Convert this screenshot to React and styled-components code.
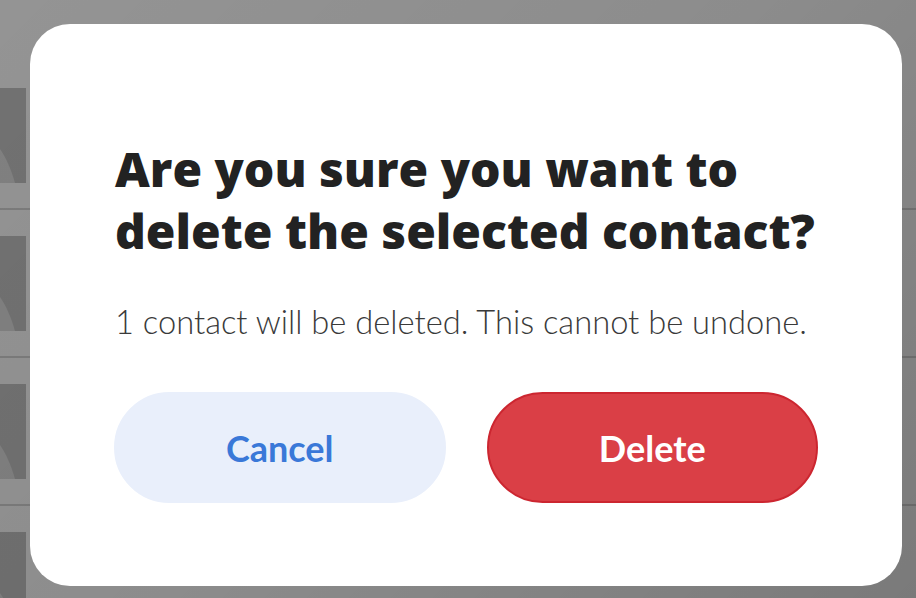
import React from 'react'
import styled, { createGlobalStyle } from 'styled-components'

const GlobalStyle = createGlobalStyle`
    html, body {
        margin: 0;
        padding: 0;
        background: #ffffff;
        overflow: hidden;
    }
`

const Page = styled.div`
    width: 916px;
    height: 598px;
    position: relative;
    overflow: hidden;
    background: #ffffff;
`

const ContactList = styled.div`
    display: flex;
    flex-direction: column;
    padding-top: 60px;
`

const ContactRow = styled.div`
    height: 146px;
    border-top: 2px solid ${props => props.first ? 'transparent' : '#d6d6d6'};
    display: flex;
    align-items: center;
`

const Avatar = styled.div`
    width: 95px;
    height: 95px;
    margin-left: -69px;
    overflow: hidden;
`

const Overlay = styled.div`
    position: absolute;
    inset: 0;
    background: linear-gradient(135deg, rgba(0, 0, 0, 0.42) 0%, rgba(0, 0, 0, 0.45) 50%, rgba(0, 0, 0, 0.52) 100%);
    display: flex;
    align-items: flex-start;
    padding: 24px 14px 0 30px;
`

const Modal = styled.div`
    width: 872px;
    height: 562px;
    box-sizing: border-box;
    background: #ffffff;
    border-radius: 40px;
    padding: 0 84px;
    display: flex;
    flex-direction: column;
`

const Title = styled.h1`
    margin: 114px 0 0 1px;
    font-family: "Open Sans", "Liberation Sans", sans-serif;
    font-weight: 800;
    font-size: 48px;
    line-height: 62px;
    color: #222222;
`

const Message = styled.p`
    margin: 41px 0 0 1px;
    font-family: Lato, "Liberation Sans", sans-serif;
    font-weight: 300;
    font-size: 32.7px;
    line-height: 38px;
    color: #3a3a3a;
`

const Actions = styled.div`
    margin-top: 51px;
    display: grid;
    grid-template-columns: 1fr 1fr;
    gap: 41px;
`

const ActionButton = styled.button`
    height: 111px;
    border-radius: 56px;
    box-sizing: border-box;
    font-family: Lato, "Liberation Sans", sans-serif;
    font-weight: 700;
    font-size: 36px;
    cursor: pointer;
    border: 2px solid ${props => props.danger ? '#cc2630' : '#e9effb'};
    background: ${props => props.danger ? '#da3f46' : '#e9effb'};
    color: ${props => props.danger ? '#ffffff' : '#3a78d8'};
`

const AvatarIcon = () => (
    <svg width="95" height="95" viewBox="0 0 95 95">
        <rect width="95" height="95" fill="#c4c4c4" />
        <circle cx="47" cy="34" r="20" fill="#dedede" />
        <path d="M0 95 C0 40 60 10 84 95 Z" fill="#dedede" />
    </svg>
)

const App = () => {
    const rows = [0, 1, 2, 3]
    return (
        <Page>
            <GlobalStyle />
            <ContactList>
                {rows.map(i => (
                    <ContactRow key={i} first={i === 0}>
                        <Avatar><AvatarIcon /></Avatar>
                    </ContactRow>
                ))}
            </ContactList>
            <Overlay>
                <Modal role="dialog">
                    <Title>Are you sure you want to delete the selected contact?</Title>
                    <Message>1 contact will be deleted. This cannot be undone.</Message>
                    <Actions>
                        <ActionButton>Cancel</ActionButton>
                        <ActionButton danger>Delete</ActionButton>
                    </Actions>
                </Modal>
            </Overlay>
        </Page>
    )
}

export default App
